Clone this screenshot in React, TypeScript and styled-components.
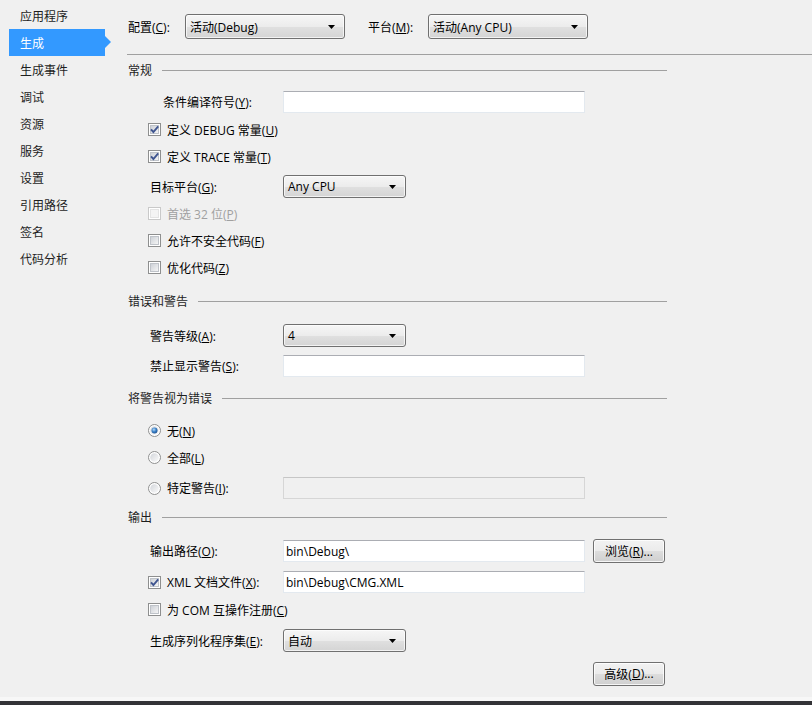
import React from 'react'
import styled, { createGlobalStyle } from 'styled-components'

const GlobalStyle = createGlobalStyle`
  html, body {
    margin: 0;
    padding: 0;
    background: #f0f0f0;
  }
  body {
    font-family: "Open Sans", "Noto Sans CJK SC", sans-serif;
    font-size: 12px;
    color: #000;
  }
  #root {
    height: 100vh;
  }
`

const navItems = [
  '应用程序',
  '生成',
  '生成事件',
  '调试',
  '资源',
  '服务',
  '设置',
  '引用路径',
  '签名',
  '代码分析',
]

function CheckBox({ checked, disabled }: { checked?: boolean; disabled?: boolean }) {
  const id = React.useId()
  return (
    <svg width="13" height="13" viewBox="0 0 13 13">
      <defs>
        <linearGradient id={id} x1="0" y1="0" x2="1" y2="1">
          <stop offset="0" stopColor="#cbcfd5" />
          <stop offset="1" stopColor="#f7f7f7" />
        </linearGradient>
      </defs>
      <rect x="0.5" y="0.5" width="12" height="12" fill="#fff" stroke={disabled ? '#c9c9c9' : '#8e8f8f'} />
      <rect
        x="2.5"
        y="2.5"
        width="8"
        height="8"
        fill={disabled ? '#f4f4f4' : `url(#${id})`}
        stroke={disabled ? '#e4e4e4' : '#bfc3c9'}
      />
      {checked && (
        <path d="M3 6.3 L5.4 9 L10.2 3.4" stroke="#3f5590" strokeWidth="1.9" fill="none" />
      )}
    </svg>
  )
}

function Radio({ checked }: { checked?: boolean }) {
  const id = React.useId()
  return (
    <svg width="13" height="13" viewBox="0 0 13 13">
      <defs>
        <linearGradient id={id + 'b'} x1="0" y1="0" x2="1" y2="1">
          <stop offset="0" stopColor="#d2d5da" />
          <stop offset="1" stopColor="#fbfbfb" />
        </linearGradient>
        <radialGradient id={id + 'd'} cx="0.4" cy="0.35" r="0.7">
          <stop offset="0" stopColor="#b9dcf7" />
          <stop offset="0.5" stopColor="#3d83c9" />
          <stop offset="1" stopColor="#1c4f8f" />
        </radialGradient>
      </defs>
      <circle cx="6.5" cy="6.5" r="6" fill="#fff" stroke="#8e8f8f" />
      <circle cx="6.5" cy="6.5" r="4.3" fill={`url(#${id}b)`} />
      {checked && <circle cx="6.5" cy="6.5" r="3" fill={`url(#${id}d)`} />}
    </svg>
  )
}

function Arrow() {
  return (
    <svg width="7" height="4" viewBox="0 0 7 4">
      <polygon points="0,0 7,0 3.5,4" fill="#000" />
    </svg>
  )
}

function Combo({ value, width, height }: { value: string; width: number; height: number }) {
  return (
    <ComboBox $w={width} $h={height}>
      <ComboText>{value}</ComboText>
      <Arrow />
    </ComboBox>
  )
}

export default function App() {
  return (
    <>
      <GlobalStyle />
      <Page>
        <Body>
          <Sidebar>
            {navItems.map(item => (
              <NavItem key={item} $active={item === '生成'}>
                {item}
              </NavItem>
            ))}
          </Sidebar>
          <Main>
            <TopBar>
              <TopLabel $w={57}>
                配置(<u>C</u>):
              </TopLabel>
              <Combo value="活动(Debug)" width={160} height={25} />
              <TopLabel $w={60} $ml={23}>
                平台(<u>M</u>):
              </TopLabel>
              <Combo value="活动(Any CPU)" width={160} height={25} />
            </TopBar>
            <Divider />

            <SectionHeader $mt={7}>常规</SectionHeader>
            <Row $mt={13} $h={22} $indent={35}>
              <FieldLabel $w={120}>
                条件编译符号(<u>Y</u>):
              </FieldLabel>
              <TextBox $w={302} />
            </Row>
            <Row $mt={3} $h={27} $indent={20}>
              <Check>
                <CheckBox checked />
                <span>
                  定义 DEBUG 常量(<u>U</u>)
                </span>
              </Check>
            </Row>
            <Row $mt={0} $h={27} $indent={20}>
              <Check>
                <CheckBox checked />
                <span>
                  定义 TRACE 常量(<u>T</u>)
                </span>
              </Check>
            </Row>
            <Row $mt={5} $h={23} $indent={22}>
              <FieldLabel $w={133}>
                目标平台(<u>G</u>):
              </FieldLabel>
              <Combo value="Any CPU" width={123} height={23} />
            </Row>
            <Row $mt={2} $h={27} $indent={20}>
              <Check $disabled>
                <CheckBox disabled />
                <span>
                  首选 32 位(<u>P</u>)
                </span>
              </Check>
            </Row>
            <Row $mt={0} $h={27} $indent={20}>
              <Check>
                <CheckBox />
                <span>
                  允许不安全代码(<u>F</u>)
                </span>
              </Check>
            </Row>
            <Row $mt={0} $h={27} $indent={20}>
              <Check>
                <CheckBox />
                <span>
                  优化代码(<u>Z</u>)
                </span>
              </Check>
            </Row>

            <SectionHeader $mt={12}>错误和警告</SectionHeader>
            <Row $mt={15} $h={23} $indent={22}>
              <FieldLabel $w={133}>
                警告等级(<u>A</u>):
              </FieldLabel>
              <Combo value="4" width={123} height={23} />
            </Row>
            <Row $mt={7} $h={23} $indent={22}>
              <FieldLabel $w={133}>
                禁止显示警告(<u>S</u>):
              </FieldLabel>
              <TextBox $w={302} />
            </Row>

            <SectionHeader $mt={13}>将警告视为错误</SectionHeader>
            <Row $mt={11} $h={27} $indent={20}>
              <Check>
                <Radio checked />
                <span>
                  无(<u>N</u>)
                </span>
              </Check>
            </Row>
            <Row $mt={0} $h={27} $indent={20}>
              <Check>
                <Radio />
                <span>
                  全部(<u>L</u>)
                </span>
              </Check>
            </Row>
            <Row $mt={6} $h={22} $indent={20}>
              <Check $w={135}>
                <Radio />
                <span>
                  特定警告(<u>I</u>):
                </span>
              </Check>
              <TextBox $w={302} $disabled />
            </Row>

            <SectionHeader $mt={10}>输出</SectionHeader>
            <Row $mt={14} $h={24} $indent={22}>
              <FieldLabel $w={133}>
                输出路径(<u>O</u>):
              </FieldLabel>
              <TextBox $w={302}>bin\Debug\</TextBox>
              <Button $ml={8}>
                浏览(<u>R</u>)...
              </Button>
            </Row>
            <Row $mt={8} $h={22} $indent={20}>
              <Check $w={135}>
                <CheckBox checked />
                <span>
                  XML 文档文件(<u>X</u>):
                </span>
              </Check>
              <TextBox $w={302}>bin\Debug\CMG.XML</TextBox>
            </Row>
            <Row $mt={3} $h={27} $indent={20}>
              <Check>
                <CheckBox />
                <span>
                  为 COM 互操作注册(<u>C</u>)
                </span>
              </Check>
            </Row>
            <Row $mt={6} $h={23} $indent={22}>
              <FieldLabel $w={133}>
                生成序列化程序集(<u>E</u>):
              </FieldLabel>
              <Combo value="自动" width={123} height={23} />
            </Row>
            <Row $mt={9} $h={25} $indent={465}>
              <Button>
                高级(<u>D</u>)...
              </Button>
            </Row>
          </Main>
        </Body>
        <Footer />
      </Page>
    </>
  )
}

const Page = styled.div`
  display: flex;
  flex-direction: column;
  height: 100%;
`

const Body = styled.div`
  flex: 1;
  display: flex;
  min-height: 0;
`

const Sidebar = styled.nav`
  width: 120px;
  flex-shrink: 0;
  padding-top: 2px;
  display: flex;
  flex-direction: column;
`

const NavItem = styled.div<{ $active?: boolean }>`
  position: relative;
  height: 27px;
  width: 96px;
  margin-left: 9px;
  padding-left: 11px;
  box-sizing: border-box;
  display: flex;
  align-items: center;
  color: ${p => (p.$active ? '#ffffff' : '#1e1e1e')};
  background: ${p => (p.$active ? '#3399ff' : 'transparent')};

  ${p =>
    p.$active &&
    `
    &::after {
      content: '';
      position: absolute;
      right: -6px;
      top: 7px;
      border-top: 6px solid transparent;
      border-bottom: 6px solid transparent;
      border-left: 6px solid #3399ff;
    }
  `}
`

const Main = styled.main`
  flex: 1;
  padding-left: 8px;
  display: flex;
  flex-direction: column;
`

const TopBar = styled.div`
  display: flex;
  align-items: center;
  padding-top: 14px;
  height: 25px;
`

const TopLabel = styled.span<{ $w: number; $ml?: number }>`
  width: ${p => p.$w}px;
  margin-left: ${p => p.$ml || 0}px;
  flex-shrink: 0;
`

const Divider = styled.div`
  margin-top: 15px;
  margin-left: -1px;
  height: 1px;
  background: #a0a0a0;
`

const SectionHeader = styled.div<{ $mt: number }>`
  margin-top: ${p => p.$mt}px;
  height: 16px;
  width: 539px;
  display: flex;
  align-items: center;
  gap: 10px;
  color: #1e1e1e;

  &::after {
    content: '';
    flex: 1;
    height: 1px;
    background: #a0a0a0;
  }
`

const Row = styled.div<{ $mt: number; $h: number; $indent: number }>`
  margin-top: ${p => p.$mt}px;
  height: ${p => p.$h}px;
  padding-left: ${p => p.$indent}px;
  display: flex;
  align-items: center;
  flex-shrink: 0;
`

const FieldLabel = styled.span<{ $w: number }>`
  width: ${p => p.$w}px;
  flex-shrink: 0;
`

const Check = styled.label<{ $disabled?: boolean; $w?: number }>`
  display: flex;
  align-items: center;
  gap: 6px;
  width: ${p => (p.$w ? p.$w + 'px' : 'auto')};
  flex-shrink: 0;
  color: ${p => (p.$disabled ? '#a0a0a0' : '#000')};

  svg {
    flex-shrink: 0;
  }
`

const TextBox = styled.div<{ $w: number; $disabled?: boolean }>`
  width: ${p => p.$w}px;
  height: 22px;
  box-sizing: border-box;
  padding-left: 2px;
  display: flex;
  align-items: center;
  background: ${p => (p.$disabled ? '#f0f0f0' : '#ffffff')};
  border: 1px solid ${p => (p.$disabled ? '#d6d6d6' : '#e3e9ef')};
  border-top-color: ${p => (p.$disabled ? '#c6c6c6' : '#abadb3')};
  white-space: nowrap;
`

const ComboBox = styled.div<{ $w: number; $h: number }>`
  width: ${p => p.$w}px;
  height: ${p => p.$h}px;
  box-sizing: border-box;
  flex-shrink: 0;
  display: flex;
  align-items: center;
  padding: 0 9px 0 4px;
  border: 1px solid #707070;
  border-radius: 3px;
  background: linear-gradient(#f6f6f6 0%, #ececec 50%, #e0e0e0 51%, #d4d4d4 100%);
  box-shadow: inset 0 0 0 1px rgba(255, 255, 255, 0.7);
`

const ComboText = styled.span`
  flex: 1;
  white-space: nowrap;
`

const Button = styled.div<{ $ml?: number }>`
  width: 72px;
  height: 24px;
  margin-left: ${p => p.$ml || 0}px;
  box-sizing: border-box;
  flex-shrink: 0;
  display: flex;
  align-items: center;
  justify-content: center;
  border: 1px solid #707070;
  border-radius: 3px;
  background: linear-gradient(#f2f2f2 0%, #ebebeb 50%, #dddddd 51%, #cfcfcf 100%);
  box-shadow: inset 0 0 0 1px rgba(255, 255, 255, 0.8);
`

const Footer = styled.div`
  height: 4px;
  flex-shrink: 0;
  background: #333337;
  border-top: 4px solid #f7f7f7;
`
